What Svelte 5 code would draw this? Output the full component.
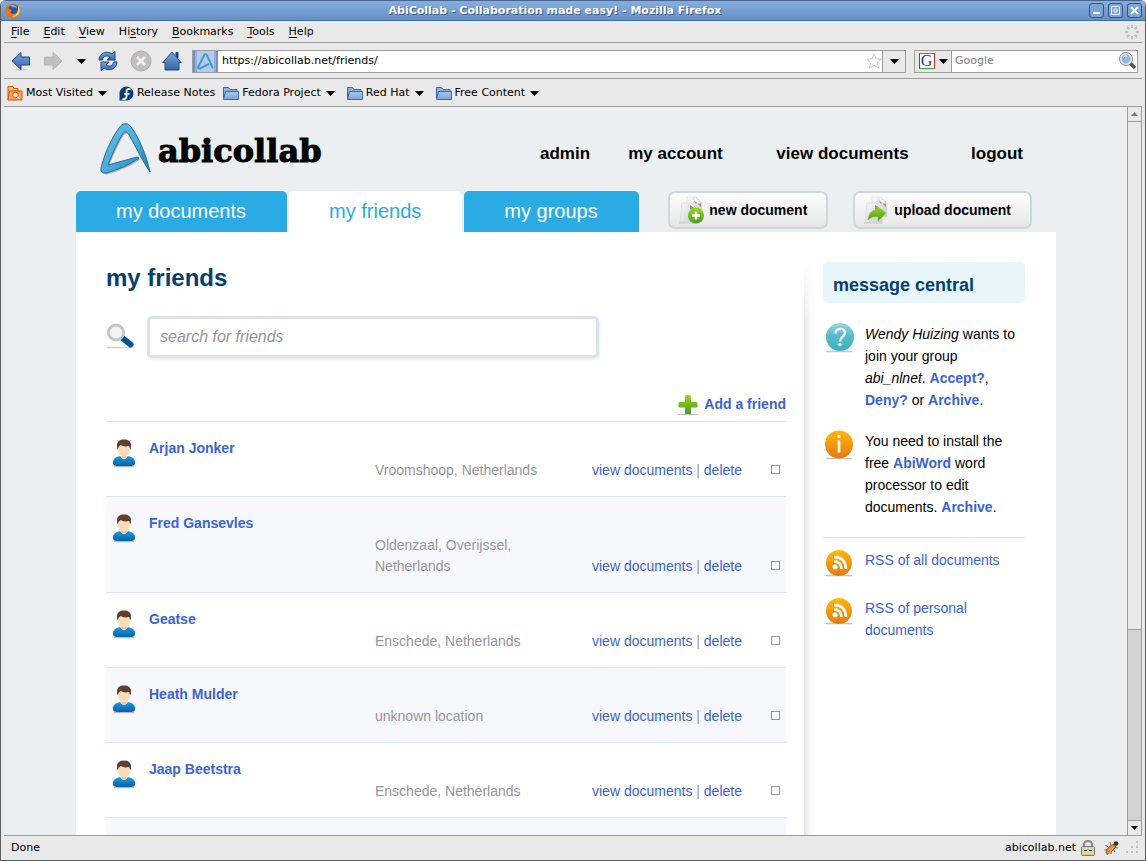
<script>
  const menus = [
    ['', 'F', 'ile'], ['', 'E', 'dit'], ['', 'V', 'iew'], ['Hi', 's', 'tory'],
    ['', 'B', 'ookmarks'], ['', 'T', 'ools'], ['', 'H', 'elp']
  ];
  const bookmarks = [
    { label: 'Most Visited', icon: 'visited', menu: true },
    { label: 'Release Notes', icon: 'fedora', menu: false },
    { label: 'Fedora Project', icon: 'folder', menu: true },
    { label: 'Red Hat', icon: 'folder', menu: true },
    { label: 'Free Content', icon: 'folder', menu: true }
  ];
  const friends = [
    { name: 'Arjan Jonker', place: 'Vroomshoop, Netherlands' },
    { name: 'Fred Gansevles', place: 'Oldenzaal, Overijssel, Netherlands' },
    { name: 'Geatse', place: 'Enschede, Netherlands' },
    { name: 'Heath Mulder', place: 'unknown location' },
    { name: 'Jaap Beetstra', place: 'Enschede, Netherlands' }
  ];
</script>

{#snippet caret()}
  <svg class="caret" width="9" height="5" viewBox="0 0 9 5"><path d="M0 0h9L4.500 5z" fill="#000" /></svg>
{/snippet}

{#snippet sheet()}
  <path d="M8 1h9l6 6v14H8z" fill="url(#paper)" stroke="#d3d5d6" stroke-width=".5" />
  <path d="M16 1.500v6h6z" fill="#fff" /><path d="M15 4l7 7v-3.500h-6z" fill="#8f9496" />
  <path d="M3 7h9l6 6v13H1z" fill="url(#paper)" stroke="#cfd1d2" stroke-width=".5" />
  <path d="M12 7.500v5.500h5.500z" fill="#fff" /><path d="M11 9v4.500h6.500z" fill="#8c9193" />
  <path d="M0 27h19" stroke="#c3c6c7" />
{/snippet}

<svg class="defs" width="0" height="0" aria-hidden="true">
  <defs>
    <linearGradient id="blue" x2="0" y2="1"><stop stop-color="#7ba6da" /><stop offset="1" stop-color="#3566a7" /></linearGradient>
    <linearGradient id="paper" x2="1" y2="1"><stop stop-color="#fafafa" /><stop offset="1" stop-color="#c9cccd" /></linearGradient>
    <linearGradient id="green" x2="0" y2="1"><stop stop-color="#9fd418" /><stop offset="1" stop-color="#4b9c22" /></linearGradient>
    <linearGradient id="orange" x2="0" y2="1"><stop stop-color="#fcb90c" /><stop offset="1" stop-color="#e67a10" /></linearGradient>
    <linearGradient id="teal" x2="0" y2="1"><stop stop-color="#9fd6df" /><stop offset=".45" stop-color="#56bccb" /><stop offset="1" stop-color="#3eb0c1" /></linearGradient>
    <linearGradient id="shirt" x2="0" y2="1"><stop stop-color="#1f9be0" /><stop offset="1" stop-color="#0462a8" /></linearGradient>
    <linearGradient id="logo" x2="1" y2="1"><stop stop-color="#62bfe8" /><stop offset=".5" stop-color="#4fadd8" /><stop offset="1" stop-color="#1f7cae" /></linearGradient>
    <linearGradient id="folder" x2="0" y2="1"><stop stop-color="#a9c6ea" /><stop offset="1" stop-color="#7fa6d6" /></linearGradient>
  </defs>
</svg>

<div class="window">
  <header class="titlebar">
    <svg width="16" height="16" viewBox="0 0 16 16"><circle cx="8" cy="8" r="7.500" fill="#e66a12" /><circle cx="8.500" cy="6.500" r="5" fill="#2b55a8" /><path d="M5 2.500c3-2 7 0 7 3-2-2-4 0-7-3z" fill="#74b2e8" /><path d="M1 3c0 2 2 3 4 3l2 2c-2 0-2 3 1 3s5-2 5-4c2-1 0-4-1-5 4 2 4 8 1 11-4 4-11 2-12-4-.5-2 0-4 0-6z" fill="#e8791a" /><path d="M13 3c3 3 2 8-1 10-2 1-4 1-5 0 4 0 7-4 6-10z" fill="#fbd34a" /></svg>
    <h1>AbiCollab - Collaboration made easy! - Mozilla Firefox</h1>
    <div class="wm">
      <button aria-label="Minimize"><svg width="9" height="9"><path d="M1 7h7" stroke="#fff" stroke-width="2" /></svg></button>
      <button aria-label="Maximize"><svg width="9" height="9"><path d="M.5.5h8v8h-8z" fill="none" stroke="#e6eef9" /><path d="M3 3h3v3H3z" fill="none" stroke="#e6eef9" /></svg></button>
      <button aria-label="Close"><svg width="9" height="9"><path d="M1 1l7 7M8 1L1 8" stroke="#fff" stroke-width="2" /></svg></button>
    </div>
  </header>

  <div class="chrome">
    <nav class="menubar" aria-label="Menu">
      {#each menus as [before, key, after]}
        <button>{before}<u>{key}</u>{after}</button>
      {/each}
      <svg class="throbber" width="14" height="14" viewBox="-7 -7 14 14" stroke="#b9b9b9" stroke-width="2.200">
        {#each [0, 45, 90, 135, 180, 225, 270, 315] as turn}<path d="M0 -7v3" transform="rotate({turn})" />{/each}
      </svg>
    </nav>

    <div class="toolbar">
      <button class="tool" aria-label="Back"><svg width="20" height="20" viewBox="0 0 20 20"><ellipse cx="10" cy="18.500" rx="7" ry="1.200" fill="#cfcfcf" /><path d="M1 10L10 1.500V6h8.500v8H10v4.500z" fill="url(#blue)" stroke="#204a87" /></svg></button>
      <button class="tool" aria-label="Forward"><svg width="20" height="20" viewBox="0 0 20 20"><path d="M19 10L10 1.500V6H1.500v8H10v4.500z" fill="#c1c1c1" stroke="#b3b3b3" /></svg></button>
      <button class="tool history" aria-label="Recent pages">{@render caret()}</button>
      <button class="tool" aria-label="Reload"><svg width="20" height="20" viewBox="0 0 20 20"><path d="M1 9C1 2 9-1 14 3l3-2.500V9H9l3-3C9 4 5 5 4.500 9z" fill="url(#blue)" stroke="#204a87" /><path d="M19 11c0 7-8 10-13 6l-3 2.500V11h8l-3 3c3 2 7 1 7.500-3z" fill="url(#blue)" stroke="#204a87" /></svg></button>
      <button class="tool stop" aria-label="Stop"><svg width="22" height="22" viewBox="0 0 22 22"><circle cx="11" cy="11" r="10" fill="#c2bebe" stroke="#b1adad" /><path d="M7 7l8 8M15 7l-8 8" stroke="#f2f2f2" stroke-width="2.500" /></svg></button>
      <button class="tool" aria-label="Home"><svg width="20" height="20" viewBox="0 0 20 20"><path d="M13.500 1h3v6h-3z" fill="#204a87" /><path d="M10 1L.8 11.500H3V19h14v-7.500h2.200z" fill="url(#blue)" stroke="#204a87" /></svg></button>
      <form class="address">
        <svg class="favicon" width="25" height="21" viewBox="0 0 25 21"><rect width="25" height="21" fill="#6f93cd" /><rect x="2" width="21" height="21" fill="#93b0dd" /><rect x="4" width="17" height="21" fill="#b6cbea" /><path d="M11.500 3.500L5 16.500q0 1 2 1l9-4.500M11.500 3.500q1.500-1 2.500 1l6 13" fill="none" stroke="#3f9fce" stroke-width="2" /></svg>
        <input aria-label="Address" value="https://abicollab.net/friends/" />
        <svg class="star" width="16" height="16" viewBox="0 0 16 16"><path d="M8 1l2.200 4.800 5 .5-3.800 3.500 1.200 5.200L8 12.300 3.400 15l1.200-5.200L.8 6.300l5-.5z" fill="#fff" stroke="#c4c4c4" /></svg>
        <button type="button" aria-label="Show history">{@render caret()}</button>
      </form>
      <form class="engine">
        <button type="button" aria-label="Search engine">
          <span class="g">G</span>{@render caret()}
        </button>
        <input aria-label="Search the web" placeholder="Google" />
        <svg width="18" height="18" viewBox="0 0 18 18"><path d="M10 10l6 6" stroke="#555" stroke-width="3.500" /><circle cx="7" cy="7" r="5.500" fill="#8fb8ea" stroke="#e8e8e8" stroke-width="2" /><circle cx="7" cy="7" r="6.500" fill="none" stroke="#8a8a8a" /><path d="M4 6q1-3 4-2" stroke="#fff" fill="none" /></svg>
      </form>
    </div>

    <nav class="bookmarks" aria-label="Bookmarks">
      {#each bookmarks as mark}
        <button class:menu={mark.menu}>
          {#if mark.icon === 'visited'}
            <svg width="16" height="16" viewBox="0 0 16 16"><path d="M1 15V1.500h5l1 2h4V6" fill="#f6b27c" stroke="#ce5c00" /><path d="M1 15l1.500-9H15v9z" fill="#f3a366" stroke="#ce5c00" /><circle cx="8.500" cy="10" r="2.800" fill="#ffe1c5" stroke="#ce5c00" /><path d="M10.500 12l2.500 2" stroke="#fff" stroke-width="1.500" /></svg>
          {:else if mark.icon === 'fedora'}
            <svg width="15" height="15" viewBox="0 0 15 15"><path d="M7.500.5a7 7 0 1 1 0 14H.5v-7a7 7 0 0 1 7-7z" fill="#0b3b78" /><path d="M11.500 3.500C9 2.300 7.500 3.500 7.500 5.500v5c0 2-1.500 3-4 2.500M5 7.800h5.500" fill="none" stroke="#fff" stroke-width="1.800" /></svg>
          {:else}
            <svg width="16" height="15" viewBox="0 0 16 15"><path d="M.5 12V1.500h5l1.500 2h7V6" fill="#8fb2de" stroke="#3b66a5" /><path d="M.5 13.500L2.500 5.500h13v8z" fill="url(#folder)" stroke="#3b66a5" /></svg>
          {/if}
          <span>{mark.label}</span>
          {#if mark.menu}{@render caret()}{/if}
        </button>
      {/each}
    </nav>
  </div>

  <div class="view">
    <div class="site">
      <div class="page">
        <div class="masthead">
          <a class="brand" href="#home">
            <svg width="54" height="54" viewBox="0 0 54 54">
              <path transform="translate(1 1.500)" opacity=".35" d="M20 6C23 1 29 0 32 5C40 15 47 33 51 50C44 40 37 25 30 13C28 9 25 9 23 13C17 23 12 35 9 43L38 35L40 36C30 43 18 48 7 51Q1 51 2 46C5 33 12 17 20 6z" fill="#333" />
              <path d="M20 6C23 1 29 0 32 5C40 15 47 33 51 50C44 40 37 25 30 13C28 9 25 9 23 13C17 23 12 35 9 43L38 35L40 36C30 43 18 48 7 51Q1 51 2 46C5 33 12 17 20 6z" fill="url(#logo)" stroke="#246f98" stroke-width="1" />
            </svg>
            <span>abicollab</span>
          </a>
          <nav class="account" aria-label="Account">
            <a href="#admin">admin</a><a href="#account">my account</a><a href="#documents">view documents</a><a href="#logout">logout</a>
          </nav>
        </div>

        <div class="tabs">
          <a href="#documents">my documents</a>
          <a href="#friends" class="active" aria-current="page">my friends</a>
          <a href="#groups">my groups</a>
          <div class="actions">
            <button><svg width="28" height="29" viewBox="0 0 28 29">{@render sheet()}<circle cx="17" cy="19.500" r="8" fill="url(#green)" /><path d="M17 15.500v8M13 19.500h8" stroke="#fff" stroke-width="2.500" /></svg>new document</button>
            <button><svg width="28" height="29" viewBox="0 0 28 29">{@render sheet()}<path d="M4 24c1-8 5-10 9-10v-4l9 7-8 8v-4c-4-1-7 0-10 3z" fill="url(#green)" stroke="#7fbf2a" stroke-width=".5" /></svg>upload document</button>
          </div>
        </div>

        <div class="panel">
          <main>
            <h2>my friends</h2>
            <form class="find">
              <svg width="28" height="28" viewBox="0 0 28 28"><path d="M1 24.500h26" stroke="#cfcfcf" stroke-width="1.500" /><path d="M17 15.500l7.500 6" stroke="#0b4f94" stroke-width="6" stroke-linecap="round" /><circle cx="10" cy="9.500" r="7.500" fill="#f3f3f3" stroke="#c6c6c6" stroke-width="3" /></svg>
              <input type="text" aria-label="Search for friends" placeholder="search for friends" />
            </form>
            <div class="add">
              <a href="#add"><svg width="20" height="20" viewBox="0 0 20 20"><path d="M0 19.500h20" stroke="#bfbfbf" /><path d="M7 1.500q0-1.500 1.500-1.500h3Q13 0 13 1.500V7h5.500q1 0 1 1v3.500q0 1-1 1H13V19H7v-6.500H1.500q-1 0-1-1V8q0-1 1-1H7z" fill="url(#green)" /></svg>Add a friend</a>
            </div>
            <table>
              <tbody>
                {#each friends as friend}
                  <tr>
                    <td class="face"><svg width="26" height="30" viewBox="0 0 26 30"><path d="M3 28.500h20" stroke="#b9b9b9" stroke-width="1.500" /><path d="M2 26c-1-5 3-7.500 8-8h6c5 .5 9 3 8 8q-1 2-4 2H6q-3 0-4-2z" fill="url(#shirt)" /><path d="M9 17.500h8l-1 2q-3 3-6 0z" fill="#e9eef2" /><path d="M10.500 15h5v4q-2.500 2.500-5 0z" fill="#f0c9a0" /><path d="M7 9q0-3 6-3t6 3q1 9-6 9t-6-9z" fill="#fbdcb8" /><path d="M6.500 11.500C4.500 4 8 1.500 13 1.500s8.500 2.500 6.500 10L18 8C14 9 11 8 10 7L7.800 8.500z" fill="#5f4030" /></svg></td>
                    <td class="name"><a href="#friend">{friend.name}</a></td>
                    <td class="place">{friend.place}</td>
                    <td class="links"><a href="#view">view documents</a> | <a href="#delete">delete</a></td>
                    <td class="pick"><input type="checkbox" aria-label="Select {friend.name}" /></td>
                  </tr>
                {/each}
                <tr class="next"><td colspan="5"></td></tr>
              </tbody>
            </table>
          </main>

          <div class="divider"></div>

          <aside>
            <h3>message central</h3>
            <div class="note">
              <svg width="32" height="31" viewBox="0 0 32 31"><path d="M3 28.500h26" stroke="#c6c6c6" stroke-width="1.500" /><circle cx="17" cy="14" r="14" fill="url(#teal)" /><path d="M12.500 10.500c0-6 9.500-6 9.500-.5 0 4-5 3.500-5 8.500" fill="none" stroke="#fff" stroke-width="2.300" /><circle cx="17" cy="21.500" r="1.700" fill="#fff" /></svg>
              <p><em>Wendy Huizing</em> wants to join your group <em>abi_nlnet</em>. <a href="#accept">Accept?</a>, <a href="#deny">Deny?</a> or <a href="#archive">Archive</a>.</p>
            </div>
            <div class="note">
              <svg width="32" height="31" viewBox="0 0 32 31"><path d="M3 28.500h26" stroke="#c6c6c6" stroke-width="1.500" /><circle cx="16" cy="14.500" r="14" fill="url(#orange)" /><path d="M16 10.500v12" stroke="#fff" stroke-width="2.800" /><circle cx="16" cy="6.500" r="1.700" fill="#fff" /></svg>
              <p>You need to install the free <a href="#abiword">AbiWord</a> word processor to edit documents. <a href="#archive2">Archive</a>.</p>
            </div>
            <ul>
              {#each ['RSS of all documents', 'RSS of personal documents'] as feed}
                <li>
                  <svg width="32" height="29" viewBox="0 0 32 29"><path d="M3 26.500h26" stroke="#c6c6c6" stroke-width="1.500" /><circle cx="16" cy="14" r="13" fill="url(#orange)" /><circle cx="12" cy="18" r="2.500" fill="#fff" /><path d="M11 12.500q7 0 7.500 7.500M11 8q11.500 0 12 12" fill="none" stroke="#fff" stroke-width="2.500" /></svg>
                  <a href="#rss">{feed}</a>
                </li>
              {/each}
            </ul>
          </aside>
        </div>
      </div>
    </div>
    <div class="scrollbar">
      <button aria-label="Scroll up"><svg width="7" height="4"><path d="M0 4h7L3.500 0z" fill="#777" /></svg></button>
      <div class="thumb"></div>
      <div class="trough"></div>
      <button aria-label="Scroll down"><svg width="7" height="4"><path d="M0 0h7L3.500 4z" fill="#000" /></svg></button>
    </div>
  </div>

  <footer>
    <span class="status">Done</span>
    <span>abicollab.net</span>
    <svg class="lock" width="16" height="16" viewBox="0 0 16 16"><path d="M4 8V5q0-4 4-4t4 4v3" fill="none" stroke="#8a8a8a" stroke-width="2" /><rect x="1.500" y="6.500" width="13" height="9" rx="1" fill="#e3d95a" stroke="#777" /><path d="M2 8h12M2 13h12" stroke="#d4d4c8" stroke-width="2" /><path d="M4 10.500h3M9 10.500h3" stroke="#333" /></svg>
    <svg class="bug" width="17" height="16" viewBox="0 0 17 16"><path d="M2 5l5 3M1 10h5M4 15l2-4M8 14l1-4M12 12l-2-3M15 8l-4-1M7 2l1 4" stroke="#777" /><path d="M3 13q-1-3 4-7l3-2 3 3-3 3q-5 5-7 3z" fill="#e47d26" stroke="#8c4a16" stroke-width=".7" /><path d="M5 11l5-5M6 13l5-6" stroke="#ffc98c" stroke-width=".7" /><circle cx="13" cy="3.500" r="2.300" fill="#333" /></svg>
    <svg class="grip" width="14" height="14" viewBox="0 0 14 14"><path d="M11 0h2v2h-2zM6 5h2v2H6zM11 5h2v2h-2zM1 10h2v2H1zM6 10h2v2H6zM11 10h2v2h-2z" fill="#bdbdbd" /></svg>
  </footer>
</div>

<style>
  :global(body) { margin: 0; background: #e9e9e9; }
  .defs { position: absolute; }
  .window {
    box-sizing: border-box;
    height: 100vh;
    display: flex;
    flex-direction: column;
    border: solid #5c5c5c;
    border-width: 0 1px 1px;
    border-radius: 6px 6px 0 0;
    overflow: hidden;
    background: #e9e9e9;
    font: 11px/14px "DejaVu Sans", sans-serif;
    color: #000;
  }
  svg { display: block; flex: none; }
  button, input { font: inherit; color: inherit; margin: 0; padding: 0; border: 0; background: none; }
  a { color: #3a63d8; text-decoration: none; }

  .titlebar {
    box-sizing: border-box;
    height: 21px;
    flex: none;
    display: grid;
    grid-template-columns: 20px 1fr 57px;
    align-items: center;
    padding: 0 3px 0 4px;
    background: linear-gradient(#87aede, #6590c3);
    border-top: 1px solid #45658f;
    border-bottom: 1px solid #3d6a9f;
    color: #fff;
  }
  .titlebar h1 { margin: 0; padding-top: 1px; font-size: 11px; line-height: 14px; text-align: center; text-shadow: 1px 1px #3c5f8e; }
  .wm { display: flex; justify-content: flex-end; gap: 4px; }
  .wm button {
    box-sizing: border-box;
    width: 15px;
    height: 15px;
    display: grid;
    place-items: center;
    border: 1px solid #2f568a;
    border-radius: 3px;
    background: #7ca4d5;
  }

  .chrome { flex: none; padding: 0 3px; }
  .menubar, .toolbar, .bookmarks { display: flex; align-items: center; border-bottom: 1px solid #9d9d9d; }
  .menubar { height: 20px; padding: 1px 3px 0 7px; gap: 14px; }
  .throbber { margin-left: auto; }
  u { text-underline-offset: 2px; }
  .toolbar { height: 34px; padding: 1px 4px 0 7px; }
  .tool { width: 20px; height: 22px; margin-right: 12px; display: grid; place-items: center; flex: none; }
  .tool.history { width: 10px; margin: 0 12px 0 1px; }
  .tool.stop { width: 22px; margin-right: 10px; }
  .address, .engine { box-sizing: border-box; display: flex; align-items: center; height: 23px; border: 1px solid #9d9d9d; background: #fff; }
  .address { flex: 1; min-width: 0; margin: 0 8px 0 -2px; }
  .address input { flex: 1; min-width: 0; padding-left: 4px; }
  .address button { align-self: stretch; width: 23px; display: grid; place-items: center; border-left: 1px solid #9d9d9d; background: #e9e9e9; }
  .engine { width: 224px; flex: none; }
  .engine button { align-self: stretch; width: 37px; box-sizing: border-box; display: flex; align-items: center; justify-content: center; gap: 4px; border-right: 1px solid #9d9d9d; background: #e9e9e9; }
  .engine input { flex: 1; min-width: 0; padding-left: 3px; }
  .engine input::placeholder { color: #808080; opacity: 1; }
  .g { width: 14px; height: 14px; border: 1px solid #3a3; border-left-color: #25c; border-right-color: #d22; background: #fff; color: #123a9c; font: 16px/14px "Liberation Serif", serif; }
  .bookmarks { height: 26px; padding: 1px 0 0 3px; gap: 8px; }
  .bookmarks button { display: flex; align-items: center; gap: 3px; }
  .bookmarks button.menu { padding-right: 4px; }
  .bookmarks .caret { margin-left: 2px; }

  .view { flex: 1; min-height: 0; display: flex; margin: 0 3px; }
  .site { flex: 1; min-width: 0; overflow: hidden; display: flex; justify-content: center; padding-left: 1px; background: #ebeff2; font: 14px/21px "Liberation Sans", Arial, sans-serif; }
  .page { width: 100%; max-width: 980px; display: flex; flex-direction: column; }
  .masthead { height: 84px; flex: none; display: flex; justify-content: space-between; align-items: center; padding: 0 6px 0 23px; }
  .brand { display: flex; align-items: center; gap: 5px; color: #000; font: bold 32px/36px "DejaVu Serif", serif; -webkit-text-stroke: 1px #000; }
  .brand span { padding-top: 4px; }
  .account { display: grid; grid-template-columns: 90px 131px 203px 106px; padding-top: 8px; text-align: center; font-size: 17px; font-weight: bold; }
  .account a { color: #000; }
  .tabs { flex: none; display: flex; gap: 2px; height: 41px; line-height: 40px; font-size: 20px; }
  .tabs > a { padding: 0 41px 0 40px; border-radius: 5px 5px 0 0; background: #2aabe4; color: #fff; }
  .tabs > a.active { background: #fff; color: #2aabe4; }
  .actions { display: flex; gap: 25px; margin-left: auto; padding-right: 24px; }
  .actions button {
    box-sizing: border-box;
    height: 38px;
    display: flex;
    align-items: center;
    gap: 2px;
    padding: 0 19px 0 9px;
    border: 2px solid #cdd8dc;
    border-radius: 7px;
    background: linear-gradient(#fcfcfc, #e6e8e8);
    font-size: 14px;
    font-weight: bold;
    line-height: 20px;
  }

  .panel { flex: 1; display: grid; grid-template-columns: minmax(0, 1fr) 12px 209px; padding: 30px 31px 0 30px; background: #fff; }
  main { padding-right: 18px; }
  h2, h3 { margin: 0; color: #05406c; }
  h2 { font-size: 24px; line-height: 32px; }
  .find { display: flex; align-items: center; gap: 13px; margin-top: 22px; }
  .find input {
    box-sizing: border-box;
    width: 452px;
    height: 42px;
    padding: 0 10px;
    border: 3px solid #d9e3e8;
    border-radius: 5px;
    background: #fff;
    box-shadow: 1px 2px 2px #eee;
    font-size: 16px;
    font-style: italic;
  }
  .find input::placeholder { color: #969696; opacity: 1; }
  .add { display: flex; justify-content: flex-end; margin-top: 36px; padding-bottom: 6px; }
  .add a { display: flex; align-items: center; gap: 6px; font-weight: bold; }
  table { width: 100%; border-collapse: collapse; table-layout: fixed; color: #969696; }
  tr { border-top: 1px solid #dde5f2; }
  tr:nth-child(even) { background: #f7f8fe; border-color: #dce4f6; }
  td { padding: 16px 0 15px; vertical-align: bottom; }
  td.face { width: 38px; padding-left: 5px; vertical-align: top; }
  td.name { width: 226px; vertical-align: top; font-weight: bold; }
  td.place { width: 177px; padding: 38px 40px 15px 0; }
  td.links { width: 164px; white-space: nowrap; }
  td.pick { text-align: right; padding-right: 6px; line-height: 0; padding-bottom: 22px; }
  .pick input { appearance: none; box-sizing: border-box; width: 9px; height: 9px; border: 1px solid #969696; background: #fff; }
  .next td { height: 42px; }

  .divider { background: linear-gradient(#fff, transparent 60px), linear-gradient(90deg, #e8e8e8, #f8f8f8 50%, #fff); }
  aside { padding-left: 7px; line-height: 22px; }
  h3 { padding: 6px 10px 0; border-radius: 5px; background: #e8f5fa; font-size: 18px; line-height: 35px; margin-bottom: 20px; }
  .note, li { display: grid; grid-template-columns: 32px 1fr; gap: 10px; padding-right: 6px; }
  .note { margin-bottom: 19px; }
  .note p { margin: 0; }
  .note a { font-weight: bold; }
  ul { list-style: none; margin: 0; padding: 11px 0 0; border-top: 1px solid #dfe2ea; }
  li { margin-bottom: 19px; }

  .scrollbar { width: 15px; flex: none; display: flex; flex-direction: column; box-sizing: border-box; border: solid #9d9d9d; border-width: 0 1px; background: #d2d2d2; }
  .scrollbar button { height: 14px; display: grid; place-items: center; background: #e9e9e9; flex: none; }
  .thumb { flex: 508; border: solid #9d9d9d; border-width: 1px 0; background: #e9e9e9; }
  .trough { flex: 191; border-bottom: 1px solid #9d9d9d; }

  footer { height: 23px; flex: none; display: flex; align-items: center; margin: 0 3px; padding: 0 3px 1px 7px; border-top: 1px solid #9d9d9d; gap: 4px; }
  .status { margin-right: auto; }
  .bug { margin-left: 3px; }
  .grip { margin-left: 1px; }
</style>
